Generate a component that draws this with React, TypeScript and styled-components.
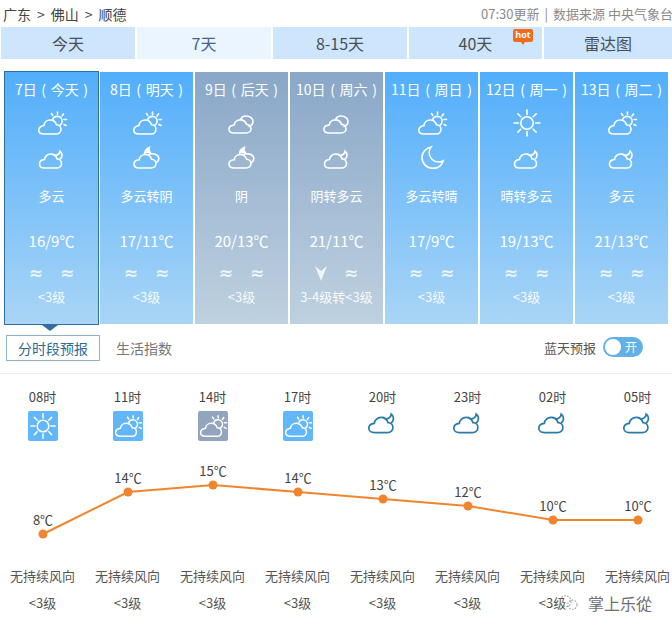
import React from 'react'
import styled, { createGlobalStyle } from 'styled-components'

const Global = createGlobalStyle`
  html, body { margin: 0; padding: 0; background: #fff; }
  body { font-family: "Noto Sans CJK SC", "Open Sans", sans-serif; width: 672px; height: 634px; overflow: hidden; }
`

type IconKind = 'cloudSun' | 'cloudMoon' | 'overcast' | 'overcastMoon' | 'moon' | 'sun'

const WeatherIcon = ({ kind, size = 32 }: { kind: IconKind; size?: number }) => (
  <svg width={size} height={size} viewBox="0 0 32 32" fill="none" stroke="currentColor" strokeWidth="1.6" strokeLinecap="round">
    {kind === 'cloudSun' && (
      <>
        <path d="M8 27h12c3 0 5-2 5-4.700 0-2.600-2-4.500-4.500-4.500-1-3-3.500-4.800-6.300-4.800-3.400 0-6 2.500-6.300 5.500C5 19 2.800 20.800 2.800 23.300 2.800 25.600 5 27 8 27z" />
        <path d="M16.500 13.300c.6-2.400 2.600-3.900 4.800-3.900 2.700 0 4.800 2.200 4.800 4.900 0 1.700-.9 3.200-2.300 4.100" />
        <path d="M21.500 5v2.500M27.500 7l-1.500 2M30.500 12.500h-2.500M30 18.500l-2-1M15.500 6.500l1.300 2" />
      </>
    )}
    {kind === 'cloudMoon' && (
      <>
        <path d="M8.500 28h12c3 0 5-2 5-4.600 0-2.500-1.900-4.400-4.400-4.500-1-3-3.600-4.900-6.400-4.900-3.300 0-5.900 2.500-6.200 5.500C5.600 19.800 3.500 21.500 3.500 24c0 2.300 2 4 5 4z" />
        <path d="M16.800 14.300c1.300 1 3.300 1.300 4.800.5 1.300-.7 2.300-2 2.400-3.700 1.500 1.200 2.200 3.100 1.900 5-.2 1.100-.8 2-1.600 2.800" />
      </>
    )}
    {kind === 'overcast' && (
      <>
        <path d="M8 26h12c3 0 5-1.900 5-4.300 0-2.300-1.900-4.200-4.400-4.300-1-2.700-3.400-4.500-6.200-4.500-3.300 0-5.900 2.300-6.200 5.100C5.200 18.300 3 20 3 22.200 3 24.400 5 26 8 26z" />
        <path d="M14.800 11.800c1-1.700 3-2.800 5.200-2.800 4 0 7 2.500 7 5.600 0 2.300-1.600 4.200-3.900 5" />
      </>
    )}
    {kind === 'overcastMoon' && (
      <>
        <path d="M8 28h12c3 0 5-1.900 5-4.400 0-2.400-1.900-4.300-4.400-4.400-1-2.800-3.400-4.700-6.200-4.700-3.300 0-5.900 2.400-6.200 5.300C5.200 20 3 21.700 3 24.100 3 26.400 5 28 8 28z" />
        <path d="M13.500 13.300c.4-2.500 2-4.700 4.800-5.800-.8 2.100-.3 4.200 1.300 5.700" fill="currentColor" />
        <path d="M18 14.300c1.400-.6 3-.8 4.500-.4 3 .6 5.300 2.500 5.300 4.700 0 2-1.300 3.500-3 4.300" />
      </>
    )}
    {kind === 'moon' && <path d="M15 7c-1.300 1.600-1.900 3.500-1.900 5.600 0 5.200 4.300 9.400 9.500 9.400 1.600 0 3.200-.4 4.400-1.100-1.300 4.400-5.300 7.300-10 7.300C10.600 28.200 6 23.400 6 17.500 6 12.500 9.800 8.100 15 7z" />}
    {kind === 'sun' && (
      <>
        <circle cx="16" cy="16" r="6.200" />
        <path d="M16 3v4.500M16 24.500V29M3 16h4.500M24.500 16H29M6.800 6.800l3 3M22.200 22.200l3 3M6.800 25.200l3-3M22.200 9.800l3-3" />
      </>
    )}
  </svg>
)

const TopRow = styled.div`
  display: flex;
  justify-content: space-between;
  align-items: center;
  height: 27px;
  padding: 0 0 0 3px;
  white-space: nowrap;
`

const Crumbs = styled.div`
  font-size: 14px;
  color: #444;
  display: flex;
  gap: 6px;
`

const Source = styled.div`
  font-size: 13px;
  color: #8b8b8b;
  display: flex;
  gap: 5px;
  margin-right: -1px;
`

const Tabs = styled.div`
  display: grid;
  grid-template-columns: 134px 134px 134px 133px 128px;
  gap: 2px;
  padding-left: 1px;
`

const Tab = styled.div<{ $active?: boolean }>`
  position: relative;
  height: 32px;
  line-height: 32px;
  text-align: center;
  font-size: 16px;
  background: ${p => (p.$active ? '#eaf5ff' : '#cde6fd')};
  color: ${p => (p.$active ? '#4a5f92' : '#4a4f56')};
`

const Hot = styled.span`
  position: absolute;
  top: 2px;
  left: 104px;
  width: 20px;
  height: 13px;
  border-radius: 2px;
  background: #f26a1b;
  color: #fff;
  font-size: 9px;
  font-weight: 700;
  line-height: 12px;
  text-align: center;
  font-family: "Open Sans", sans-serif;
  &::after {
    content: '';
    position: absolute;
    left: 8px;
    bottom: -3px;
    border-style: solid;
    border-width: 3px 2px 0;
    border-color: #f26a1b transparent transparent;
  }
`

const Days = styled.div`
  display: grid;
  grid-template-columns: repeat(7, 93px);
  gap: 2px;
  padding: 13px 0 0 5px;
`

const Day = styled.div<{ $gray?: boolean; $selected?: boolean }>`
  position: relative;
  height: 252px;
  color: #fff;
  text-align: center;
  display: flex;
  flex-direction: column;
  align-items: center;
  background: linear-gradient(${p => (p.$gray ? '#8aa7c8, #bed1e0' : '#52aefb, #a9d5f6')});
  ${p =>
    p.$selected &&
    `
    outline: 1px solid #2f6f9f;
    &::after {
      content: '';
      position: absolute;
      left: 37px;
      bottom: -7px;
      border-style: solid;
      border-width: 6px 8px 0;
      border-color: #2f6f9f transparent transparent;
    }
  `}
`

const DayTitle = styled.div`
  font-size: 14px;
  line-height: 18px;
  margin-top: 8px;
  white-space: pre;
  word-spacing: 1.5px;
`

const DayIcon = styled.div<{ $top: number }>`
  height: 32px;
  margin-top: ${p => p.$top}px;
  display: flex;
`

const Desc = styled.div`
  font-size: 13px;
  line-height: 18px;
  margin-top: 15px;
  white-space: nowrap;
`

const Temp = styled.div`
  font-size: 15px;
  line-height: 20px;
  margin-top: 26px;
  white-space: nowrap;
`

const WindRow = styled.div`
  display: flex;
  justify-content: center;
  align-items: center;
  gap: 17px;
  height: 18px;
  margin-top: 13px;
  font-size: 17px;
  font-weight: 700;
  line-height: 18px;
  opacity: 0.8;
  font-family: "DejaVu Sans", sans-serif;
`

const Level = styled.div`
  font-size: 13px;
  line-height: 16px;
  margin-top: 7px;
  white-space: nowrap;
  opacity: 0.9;
`

const SubBar = styled.div`
  display: flex;
  align-items: center;
  height: 49px;
  padding: 0 29px 0 6px;
  border-bottom: 1px solid #eee;
`

const SubTab = styled.div<{ $active?: boolean }>`
  height: 26px;
  width: ${p => (p.$active ? 94 : 88)}px;
  box-sizing: border-box;
  line-height: 24px;
  text-align: center;
  font-size: 14px;
  margin-top: -2px;
  color: ${p => (p.$active ? '#2c6a94' : '#777')};
  border: ${p => (p.$active ? '1px solid #8fb0c8' : '1px solid transparent')};
`

const BlueSky = styled.div`
  margin-left: auto;
  display: flex;
  align-items: center;
  gap: 7px;
  font-size: 13px;
  color: #555;
  margin-top: -3px;
`

const Toggle = styled.div`
  position: relative;
  width: 40px;
  height: 20px;
  border-radius: 10px;
  background: #62b0e6;
  color: #fff;
  font-size: 12px;
  line-height: 20px;
  padding-left: 22px;
  box-sizing: border-box;
  &::before {
    content: '';
    position: absolute;
    left: 2px;
    top: 2px;
    width: 16px;
    height: 16px;
    border-radius: 50%;
    background: #fff;
  }
`

const Hours = styled.div`
  display: grid;
  grid-template-columns: repeat(8, 85px);
  margin-top: 14px;
`

const Hour = styled.div`
  display: flex;
  flex-direction: column;
  align-items: center;
  font-size: 13px;
  color: #444;
  line-height: 18px;
`

const HourIcon = styled.div<{ $bg?: string }>`
  width: 30px;
  height: 30px;
  margin-top: 5px;
  border-radius: 2px;
  box-sizing: border-box;
  display: flex;
  align-items: center;
  justify-content: center;
  background: ${p => p.$bg ?? 'transparent'};
  color: ${p => (p.$bg ? '#fff' : '#2a7ba8')};
  padding-bottom: ${p => (p.$bg ? 0 : 14)}px;
  svg {
    flex: none;
  }
`

const Chart = styled.svg`
  display: block;
  margin-top: 15px;
  text {
    font-size: 13px;
    fill: #444;
    text-anchor: middle;
  }
`

const WindGrid = styled.div`
  display: grid;
  grid-template-columns: repeat(8, 85px);
  font-size: 13px;
  color: #555;
  text-align: center;
  white-space: nowrap;
  line-height: 16px;
`

const WindCell = styled.div`
  display: flex;
  flex-direction: column;
  gap: 11px;
  align-items: center;
`

const Watermark = styled.div`
  position: absolute;
  left: 558px;
  top: 592px;
  width: 114px;
  box-sizing: border-box;
  display: flex;
  align-items: center;
  gap: 8px;
  height: 22px;
  font-size: 16px;
  color: #6f6f6f;
  white-space: nowrap;
  background: linear-gradient(to right, transparent 6px, #fff 12px);
`

const days: { title: string; icons: [IconKind, IconKind]; desc: string; temp: string; arrow?: boolean; level: string; gray?: boolean }[] = [
  { title: '7日 ( 今天 )', icons: ['cloudSun', 'cloudMoon'], desc: '多云', temp: '16/9℃', level: '<3级' },
  { title: '8日 ( 明天 )', icons: ['cloudSun', 'overcastMoon'], desc: '多云转阴', temp: '17/11℃', level: '<3级' },
  { title: '9日 ( 后天 )', icons: ['overcast', 'overcastMoon'], desc: '阴', temp: '20/13℃', level: '<3级', gray: true },
  { title: '10日 ( 周六 )', icons: ['overcast', 'cloudMoon'], desc: '阴转多云', temp: '21/11℃', arrow: true, level: '3-4级转<3级', gray: true },
  { title: '11日 ( 周日 )', icons: ['cloudSun', 'moon'], desc: '多云转晴', temp: '17/9℃', level: '<3级' },
  { title: '12日 ( 周一 )', icons: ['sun', 'cloudMoon'], desc: '晴转多云', temp: '19/13℃', level: '<3级' },
  { title: '13日 ( 周二 )', icons: ['cloudSun', 'cloudMoon'], desc: '多云', temp: '21/13℃', level: '<3级' },
]

const hours: { time: string; kind: IconKind; bg?: string; temp: number; y: number }[] = [
  { time: '08时', kind: 'sun', bg: '#62b7fb', temp: 8, y: 533 },
  { time: '11时', kind: 'cloudSun', bg: '#62b7fb', temp: 14, y: 491 },
  { time: '14时', kind: 'cloudSun', bg: '#93a5be', temp: 15, y: 484 },
  { time: '17时', kind: 'cloudSun', bg: '#62b7fb', temp: 14, y: 491 },
  { time: '20时', kind: 'cloudMoon', temp: 13, y: 498 },
  { time: '23时', kind: 'cloudMoon', temp: 12, y: 505 },
  { time: '02时', kind: 'cloudMoon', temp: 10, y: 519 },
  { time: '05时', kind: 'cloudMoon', temp: 10, y: 519 },
]

const chartTop = 455

export default function App() {
  const points = hours.map((h, i) => ({ x: 43 + i * 85, y: h.y - chartTop, temp: h.temp }))
  return (
    <>
      <Global />
      <TopRow>
        <Crumbs>
          <span>广东</span><span>&gt;</span><span>佛山</span><span>&gt;</span><span>顺德</span>
        </Crumbs>
        <Source>
          <span>07:30更新</span><span>|</span><span>数据来源 中央气象台</span>
        </Source>
      </TopRow>
      <Tabs>
        <Tab>今天</Tab>
        <Tab $active>7天</Tab>
        <Tab>8-15天</Tab>
        <Tab>40天<Hot>hot</Hot></Tab>
        <Tab>雷达图</Tab>
      </Tabs>
      <Days>
        {days.map((d, i) => (
          <Day key={d.title} $gray={d.gray} $selected={i === 0}>
            <DayTitle>{d.title}</DayTitle>
            <DayIcon $top={9}><WeatherIcon kind={d.icons[0]} /></DayIcon>
            <DayIcon $top={1}><WeatherIcon kind={d.icons[1]} /></DayIcon>
            <Desc>{d.desc}</Desc>
            <Temp>{d.temp}</Temp>
            <WindRow>
              {d.arrow ? (
                <svg width="12" height="15" viewBox="0 0 12 15" fill="currentColor">
                  <path d="M0 0l6 5 6-5-6 15z" />
                </svg>
              ) : (
                <span>≈</span>
              )}
              <span>≈</span>
            </WindRow>
            <Level>{d.level}</Level>
          </Day>
        ))}
      </Days>
      <SubBar>
        <SubTab $active>分时段预报</SubTab>
        <SubTab>生活指数</SubTab>
        <BlueSky>蓝天预报<Toggle>开</Toggle></BlueSky>
      </SubBar>
      <Hours>
        {hours.map(h => (
          <Hour key={h.time}>
            {h.time}
            <HourIcon $bg={h.bg}><WeatherIcon kind={h.kind} size={h.bg ? 30 : 35} /></HourIcon>
          </Hour>
        ))}
      </Hours>
      <Chart width="672" height="112" viewBox="0 0 672 112">
        <polyline points={points.map(p => `${p.x},${p.y}`).join(' ')} fill="none" stroke="#f0852d" strokeWidth="2" />
        {points.map(p => (
          <g key={p.x}>
            <circle cx={p.x} cy={p.y} r="4.500" fill="#f0852d" />
            <text x={p.x} y={p.y - 9}>{p.temp}℃</text>
          </g>
        ))}
      </Chart>
      <WindGrid>
        {hours.map(h => (
          <WindCell key={h.time}>
            <span>无持续风向</span>
            <span>&lt;3级</span>
          </WindCell>
        ))}
      </WindGrid>
      <Watermark>
        <svg width="22" height="20" viewBox="0 0 26 20" fill="none" stroke="#999" strokeWidth="1.2" strokeDasharray="2 1.500">
          <circle cx="9" cy="8" r="6.500" />
          <circle cx="17" cy="12" r="5.500" />
        </svg>
        掌上乐從
      </Watermark>
    </>
  )
}
